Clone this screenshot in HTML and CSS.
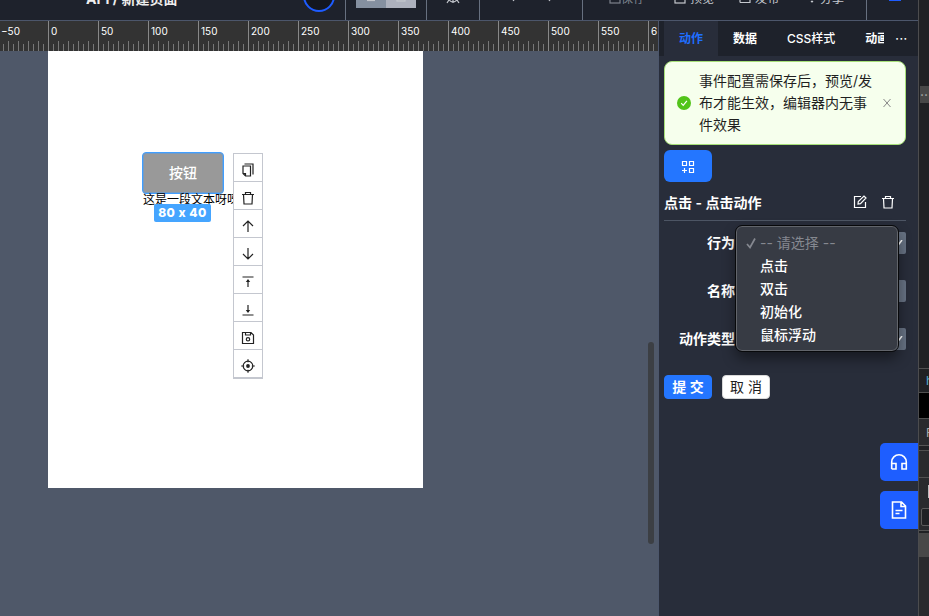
FILE: index.html
```html
<!DOCTYPE html>
<html lang="zh-CN">
<head>
<meta charset="utf-8">
<title>新建页面</title>
<link rel="stylesheet" href="styles.css">
</head>
<body>
<div class="window">
  <div class="app">
    <header class="topbar">
      <div class="group group-title"><span class="title">API / 新建页面</span><span class="ring"></span></div>
      <div class="group group-toggle"><span class="toggle"><i>
        <svg width="12" height="16" viewBox="0 0 12 16"><path d="M2 12.5h8"/></svg></i><i class="on">
        <svg width="12" height="16" viewBox="0 0 12 16"><rect x="2" y="2" width="8" height="11"/></svg></i></span></div>
      <div class="group group-bug"><svg width="16" height="18" viewBox="0 0 16 18"><path d="M4 11a4 4 0 0 0 8 0V5H4zM8 6v10M2 16l2-3M14 16l-2-3M1 10h3M12 10h3"/></svg></div>
      <div class="group group-history"><svg width="14" height="14" viewBox="0 0 14 14"><path d="M9 2L5 7l4 5"/></svg><svg width="14" height="14" viewBox="0 0 14 14"><path d="M5 2l4 5-4 5"/></svg></div>
      <div class="group group-actions">
        <span class="dim"><svg width="12" height="13" viewBox="0 0 12 13"><rect x="1" y="1" width="10" height="10"/></svg>保存</span>
        <span><svg width="12" height="13" viewBox="0 0 12 13"><rect x="1" y="1" width="10" height="10"/></svg>预览</span>
        <span><svg width="12" height="13" viewBox="0 0 12 13"><path d="M1 10.5h10V8M1 8v2.500"/></svg>发布</span>
        <span><svg width="12" height="13" viewBox="0 0 12 13"><path d="M7 9l1 1 1-1"/></svg>分享</span>
      </div>
      <div class="group group-menu"><b></b></div>
    </header>
    <div class="workspace">
      <section class="stage">
        <div class="ruler">
          <span>−50</span><span>0</span><span>50</span><span>100</span><span>150</span><span>200</span><span>250</span><span>300</span><span>350</span><span>400</span><span>450</span><span>500</span><span>550</span><span>6</span>
        </div>
        <div class="canvas">
          <div class="page">
            <div class="node-button">按钮</div>
            <div class="node-text">这是一段文本呀呀</div>
            <div class="size-tag">80 x 40</div>
            <div class="node-tools">
              <i><svg viewBox="0 0 14 14"><path d="M3.500 1h8.500v10.500M2 3h7.500v10H4.500L2 10.500zM2 10.500h2.500V13"/></svg></i>
              <i><svg viewBox="0 0 14 14"><path d="M1 3.500h12M4.500 3.500v-2h5v2M2.500 3.500l.5 9.500h8l.5-9.500"/></svg></i>
              <i><svg viewBox="0 0 14 14"><path d="M7 13V2M2 7l5-5 5 5"/></svg></i>
              <i><svg viewBox="0 0 14 14"><path d="M7 1v11M2 7l5 5 5-5"/></svg></i>
              <i><svg viewBox="0 0 14 14"><path d="M1.500 2h11M7 12V5"/><path class="solid" d="M4.800 7L7 4l2.200 3z"/></svg></i>
              <i><svg viewBox="0 0 14 14"><path d="M1.500 12h11M7 2v7"/><path class="solid" d="M4.800 7L7 10l2.200-3z"/></svg></i>
              <i><svg viewBox="0 0 14 14"><path d="M1.500 1.500h8.500l2.500 2.500v8.500h-11zM4.500 1.500V4h5V1.500"/><circle cx="7" cy="8.300" r="1.700"/></svg></i>
              <i><svg viewBox="0 0 14 14"><circle cx="7" cy="7" r="4.800"/><path d="M7 .2v3M7 10.800v3M.2 7h3M10.800 7h3"/><circle class="solid" cx="7" cy="7" r="1.900"/></svg></i>
            </div>
          </div>
          <div class="scrollbar"></div>
        </div>
      </section>
      <aside class="panel">
        <nav class="tabs"><span class="tab active">动作</span><span class="tab">数据</span><span class="tab">CSS样式</span><span class="tab cut">动画</span><span class="more">···</span></nav>
        <div class="panel-body">
          <div class="alert">
            <svg class="ok" viewBox="0 0 14 14"><circle cx="7" cy="7" r="7"/><path d="M4.200 7.200l2 2.100 3.700-4.500"/></svg>
            <p>事件配置需保存后，预览/发布才能生效，编辑器内无事件效果</p>
            <svg class="close" viewBox="0 0 10 10"><path d="M1.500 1l7 8M8.500 1l-7 8"/></svg>
          </div>
          <div class="add"><svg viewBox="0 0 14 14"><path d="M1.500 1.500h4v4h-4zM8.500 1.500h4v4h-4zM8.500 8.500h4v4h-4zM3.500 8v5M1 10.500h5"/></svg></div>
          <div class="event-head"><span>点击 - 点击动作</span>
            <svg viewBox="0 0 14 14"><path d="M8 1.500H1.500v11h11V7M5 9l.3-2.500L11 1l2 2-5.500 5.700z"/></svg>
            <svg viewBox="0 0 14 14"><path d="M1 3.500h12M4.500 3.500v-2h5v2M2.500 3.500l.5 9.500h8l.5-9.500"/></svg>
          </div>
          <div class="form">
            <div class="row"><label>行为</label><div class="field"><svg viewBox="0 0 8 6"><path d="M1 5l3-1 3-4"/></svg></div></div>
            <div class="row"><label>名称</label><div class="field"></div></div>
            <div class="row"><label>动作类型</label><div class="field"><svg viewBox="0 0 8 6"><path d="M1 5l3-1 3-4"/></svg></div></div>
            <ul class="menu">
              <li class="placeholder"><svg viewBox="0 0 10 12"><path d="M1 7l3 3.500L9 1.500"/></svg>-- 请选择 --</li><li>点击</li><li>双击</li><li>初始化</li><li>鼠标浮动</li>
            </ul>
          </div>
          <div class="buttons"><span class="primary">提 交</span><span>取 消</span></div>
        </div>
        <div class="floats">
          <i><svg viewBox="0 0 18 18"><path d="M1.700 16V9a7.300 7.300 0 0 1 14.600 0v7H12v-5.500h4.300M1.700 10.500H6V16H1.700"/></svg></i>
          <i><svg viewBox="0 0 18 18"><path d="M2.500 1h9l4 4v12h-13zM11 1v4.500h4.500M5.500 9.500h7M5.500 12.500h4"/></svg></i>
        </div>
      </aside>
    </div>
  </div>
  <div class="inspector">
    <div class="i-top"></div><div class="i-more">··</div><div class="i-tree"></div>
    <div class="i-tag">h</div><div class="i-black"></div><div class="i-filter">F</div><div class="i-gap"></div><div class="i-line"></div><div class="i-box"><b></b><span></span></div><div class="i-bar"></div><div class="i-rest"></div>
  </div>
</div>
</body>
</html>
```
FILE: styles.css
```css
* { box-sizing: border-box; }
body { margin: 0; overflow: hidden; font: 14px/22px Inter, "Noto Sans CJK SC", sans-serif; color: #fff; }
svg { display: block; flex: none; fill: none; stroke: currentColor; stroke-width: 1.2; }
i { font-style: normal; }
.window { display: flex; width: 929px; height: 616px; overflow: hidden; background: #202124; }
.app { width: 918px; flex: none; display: flex; flex-direction: column; }

.topbar { display: flex; height: 49px; margin-top: -28px; flex: none; background: #1e222c; border-bottom: 1px solid #4c566b; }
.group { display: flex; align-items: center; justify-content: center; border-right: 1px solid #677080; color: #c5c8ce; }
.group-title { width: 346px; justify-content: space-between; padding: 0 10px 0 86px; }
.title { padding-top: 5px; font-weight: 700; color: #eee; }
.ring { width: 32px; height: 32px; border: 2px solid #1e5cff; border-radius: 50%; background: #14171e; }
.group-toggle { width: 81px; }
.toggle { display: flex; height: 24px; }
.toggle i { width: 30px; display: flex; align-items: center; justify-content: center; background: #8590a0; }
.toggle i.on { background: #adb1bd; }
.group-bug { width: 53px; }
.group-history { width: 103px; gap: 25px; }
.group-actions { width: 284px; justify-content: flex-start; padding: 5px 0 0 26px; gap: 24px; font-size: 12px; }
.group-actions span { display: flex; align-items: center; gap: 4px; width: 41px; white-space: nowrap; }
.group-actions .dim { color: #7d828c; gap: 0; }
.group-menu { width: 51px; border: 0; padding-left: 5px; }
.group-menu b { width: 12px; height: 10px; border-bottom: 2px solid #1e5cff; }

.workspace { display: flex; flex: 1; min-height: 0; }
.stage { width: 659px; display: flex; flex-direction: column; border-right: 1px solid #4c566b; overflow: hidden; }
.ruler { display: flex; height: 30px; flex: none; margin-left: -2px; background: #333; }
.ruler span { width: 50px; flex: none; padding: 3px 0 0 3px; height: 30px; font: 10px/14px Inter, sans-serif; color: #fff;
  background: linear-gradient(#888, #888) 0 0 / 1px 30px no-repeat,
    repeating-linear-gradient(90deg, #777 0 1px, transparent 1px 10px) 0 100% / 100% 10px no-repeat,
    repeating-linear-gradient(90deg, transparent 0 5px, #777 5px 6px, transparent 6px 10px) 0 100% / 100% 7px no-repeat; }
.canvas { position: relative; flex: 1; background: #4f5869; }
.page { position: relative; width: 375px; height: 437px; margin-left: 48px; background: #fff; }
.node-button { position: absolute; left: 94px; top: 101px; width: 82px; height: 42px; border: 1px solid #409eff; outline: 1px solid #409eff66; outline-offset: -2px; border-radius: 4px; background: #999; text-align: center; line-height: 40px; font-weight: 500; }
.node-text { position: absolute; left: 95px; top: 141px; width: 100px; white-space: nowrap; font-size: 12px; line-height: 16px; color: #000; }
.size-tag { position: absolute; left: 106px; top: 153px; width: 57px; height: 18px; border-radius: 2px; background: #45a5ff; text-align: center; font: 800 12px/18px Inter, sans-serif; letter-spacing: .5px; }
.node-tools { position: absolute; left: 185px; top: 102px; width: 30px; border: 1px solid #c4c7cf; border-bottom-width: 2px; background: #fff; color: #222; }
.node-tools i { display: flex; height: 28px; padding-top: 4px; align-items: center; justify-content: center; border-bottom: 1px solid #c4c7cf; }
.node-tools i:last-child { height: 27px; border: 0; }
.node-tools svg { width: 14px; height: 14px; }
.solid { fill: currentColor; stroke: none; }
.scrollbar { position: absolute; right: 4px; top: 291px; width: 6px; height: 202px; border-radius: 3px; background: #3c3f44; }

.panel { position: relative; width: 259px; background: #282d3a; }
.tabs { display: flex; height: 35px; padding-left: 5px; background: #1e222b; font-size: 12px; line-height: 35px; font-weight: 600; }
.tab { flex: none; padding: 0 15px; white-space: nowrap; }
.tab:nth-child(3) { font-weight: 500; }
.active { background: #282d3a; color: #1f6fff; }
.cut { width: 34px; padding-right: 0; overflow: hidden; }
.more { margin-left: 11px; letter-spacing: .5px; font-weight: 500; }
.panel-body { padding: 5px 12px 0 5px; }
.alert { display: flex; align-items: center; height: 84px; padding: 0 13px 0 12px; border: 1px solid #a6df78; border-radius: 8px; background: #f6ffed; color: #1f1f1f; }
.ok { width: 14px; height: 14px; }
.ok circle { fill: #52c41a; stroke: none; }
.ok path { stroke: #fff; }
.alert p { flex: none; width: 176px; margin: 0 7px 0 8px; word-break: break-all; }
.close { width: 10px; height: 10px; color: #888; stroke-width: 1; }
.add { display: flex; align-items: center; justify-content: center; width: 48px; height: 32px; margin-top: 5px; border-radius: 6px; background: #2476ff; }
.add svg { width: 14px; height: 14px; margin-top: 2px; }
.event-head { display: flex; align-items: center; height: 39px; padding: 3px 11px 0 0; border-bottom: 1px solid #4d5564; font-weight: 600; gap: 14px; }
.event-head span { flex: 1; }
.event-head svg { width: 14px; height: 14px; margin-top: -1px; }
.form { position: relative; padding-top: 11px; }
.row { display: flex; height: 22px; margin-bottom: 26px; font-weight: 600; }
.row label { width: 71px; text-align: right; }
.field { flex: 1; display: flex; align-items: center; justify-content: flex-end; padding-right: 3px; margin-left: 8px; border-radius: 2px; background: #677283; }
.field svg { width: 8px; height: 6px; stroke-width: 1.5; }
.menu { position: absolute; left: 72px; top: 5px; width: 162px; height: 125px; margin: 0; padding: 4px 0 0 23px; list-style: none; border: 1px solid #62656b; border-radius: 6px; outline: 1px solid #08090b; background: #373b44; box-shadow: 0 7px 14px #0007; font-weight: 500; }
.menu li { display: flex; align-items: center; height: 23px; }
.menu .placeholder { margin-left: -14px; gap: 4px; color: #858890; font-weight: 400; }
.placeholder svg { width: 10px; height: 12px; stroke-width: 1.7; }
.buttons { display: flex; gap: 10px; margin-top: -16px; padding-top: 15px; }
.buttons span { width: 48px; height: 24px; border-radius: 4px; border: 1px solid #d9d9d9; background: #fff; color: #222; text-align: center; }
.buttons .primary { border-color: #2476ff; background: #2476ff; color: #fff; font-weight: 600; }
.floats { position: absolute; right: 0; top: 422px; display: grid; gap: 10px; }
.floats i { display: flex; align-items: center; justify-content: center; width: 38px; height: 38px; border-radius: 5px 0 0 5px; background: #1e5eff; }
.floats svg { width: 18px; height: 18px; stroke-width: 1.6; }

.inspector { width: 11px; display: flex; flex-direction: column; border-left: 1px solid #4c4c4e; overflow: hidden; line-height: 24px; }
.inspector > div { flex: none; }
.i-top { height: 86px; }
.i-more { height: 17px; margin-left: 1px; background: #484848; color: #aaa; line-height: 17px; }
.i-tree { height: 265px; }
.i-tag { height: 24px; border-top: 1px solid #505050; padding-left: 7px; color: #5db0d7; font-size: 12px; }
.i-black { height: 27px; background: #000; border-top: 1px solid #505050; border-bottom: 1px solid #505050; }
.i-filter { height: 27px; padding-left: 7px; background: #292a2d; border-bottom: 1px solid #555; color: #aaa; font-size: 12px; line-height: 27px; }
.i-gap { height: 4px; }
.i-line { height: 28px; background: #292a2d; border-top: 1px solid #505050; border-bottom: 1px solid #505050; }
.i-box { height: 53px; padding: 7px 0 0 2px; background: #292a2d; border-bottom: 1px solid #555; }
.i-box b { display: block; width: 1px; height: 13px; margin-left: 7px; background: #bbb; }
.i-box span { display: block; width: 20px; height: 18px; margin-top: 10px; border: 1px solid #5a5a5a; border-radius: 2px; background: #202124; }
.i-bar { height: 24px; margin-top: 2px; background: #484848; }
.i-rest { height: 59px; background: #292a2d; }
```
